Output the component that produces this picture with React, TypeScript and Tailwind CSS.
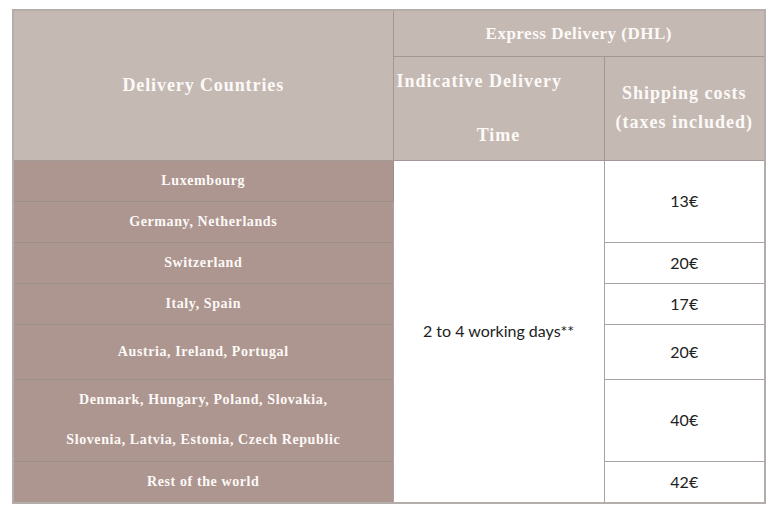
import React from 'react';

const serif = "font-['Liberation_Serif',serif] font-bold text-[#fcf9f7]";
const sans = "font-['Lato',sans-serif] text-[16px] text-[#222]";

const countries = [
    { name: 'Luxembourg', h: 'h-[41px]' },
    { name: 'Germany, Netherlands', h: 'h-[41px]' },
    { name: 'Switzerland', h: 'h-[41px]' },
    { name: 'Italy, Spain', h: 'h-[41px]' },
    { name: 'Austria, Ireland, Portugal', h: 'h-[55px]' },
    { name: 'Denmark, Hungary, Poland, Slovakia, Slovenia, Latvia, Estonia, Czech Republic', h: 'h-[82px]', split: true },
    { name: 'Rest of the world', h: 'h-[42px]' },
];

// price cells: index of the row they start in -> [price, rowSpan]
const prices: Record<number, [string, number]> = {
    0: ['13€', 2],
    2: ['20€', 1],
    3: ['17€', 1],
    4: ['20€', 1],
    5: ['40€', 1],
    6: ['42€', 1],
};

export default function App() {
    return (
        <div className="w-[780px] h-[514px] bg-white pt-[9px] pl-[12px]">
            <table className="table-fixed border-collapse w-[752px] border-2 border-[#b3adab]">
                <colgroup>
                    <col className="w-[380px]" />
                    <col className="w-[211px]" />
                    <col className="w-[161px]" />
                </colgroup>
                <thead>
                    <tr className="h-[46px]">
                        <th rowSpan={2} className={`bg-[#c5b9b4] border border-[#a39896] text-[18px] tracking-[0.9px] ${serif}`}>
                            Delivery Countries
                        </th>
                        <th colSpan={2} className={`bg-[#c5b9b4] border border-[#a39896] text-[17px] tracking-[0.5px] ${serif}`}>
                            Express Delivery (DHL)
                        </th>
                    </tr>
                    <tr className="h-[103px]">
                        <th className={`bg-[#c5b9b4] border border-[#a39896] text-[18px] tracking-[1px] align-top ${serif}`}>
                            <div className="h-[47px] leading-[48px] text-left pl-[3px] whitespace-nowrap">Indicative Delivery</div>
                            <div className="h-[56px] leading-[62px] text-center">Time</div>
                        </th>
                        <th className={`bg-[#c5b9b4] border border-[#a39896] text-[18px] tracking-[1px] leading-[29px] ${serif}`}>
                            Shipping costs
                            <br />
                            (taxes included)
                        </th>
                    </tr>
                </thead>
                <tbody>
                    {countries.map((c, i) => (
                        <tr key={c.name} className={c.h}>
                            <td className={`bg-[#ae9690] border border-[#9c8e8b] text-center text-[14px] tracking-[0.6px] ${c.split ? 'leading-[40px]' : ''} ${serif}`}>
                                {c.split ? (
                                    <>
                                        Denmark, Hungary, Poland, Slovakia,
                                        <br />
                                        Slovenia, Latvia, Estonia, Czech Republic
                                    </>
                                ) : c.name}
                            </td>
                            {i === 0 && (
                                <td rowSpan={countries.length} className={`bg-white border border-[#a8a4a3] text-center ${sans}`}>
                                    2 to 4 working days**
                                </td>
                            )}
                            {prices[i] && (
                                <td rowSpan={prices[i][1]} className={`bg-white border border-[#a8a4a3] text-center ${sans}`}>
                                    {prices[i][0]}
                                </td>
                            )}
                        </tr>
                    ))}
                </tbody>
            </table>
        </div>
    );
}
